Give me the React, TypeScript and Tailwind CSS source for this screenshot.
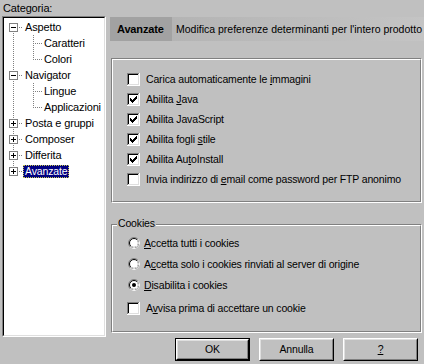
import React from "react";

const FONT = "font-['Liberation_Sans',Arial,sans-serif] text-[10.5px] tracking-[-0.15px] leading-[13px] text-black";

type Node = {
  label: string;
  level: 0 | 1;
  exp?: "+" | "-";
  first?: boolean;
  last?: boolean;
  lastChild?: boolean;
  selected?: boolean;
};

const tree: Node[] = [
  { label: "Aspetto", level: 0, exp: "-", first: true },
  { label: "Caratteri", level: 1 },
  { label: "Colori", level: 1, lastChild: true },
  { label: "Navigator", level: 0, exp: "-" },
  { label: "Lingue", level: 1 },
  { label: "Applicazioni", level: 1, lastChild: true },
  { label: "Posta e gruppi", level: 0, exp: "+" },
  { label: "Composer", level: 0, exp: "+" },
  { label: "Differita", level: 0, exp: "+" },
  { label: "Avanzate", level: 0, exp: "+", last: true, selected: true },
];

// dotted 1px lines, every other pixel
function vDots(x: number, y0: number, y1: number, key: string) {
  const out = [];
  for (let y = y0; y <= y1; y++) {
    if (y % 2 === 0) out.push(<rect key={key + y} x={x} y={y} width={1} height={1} fill="#808080" />);
  }
  return out;
}

function hDots(y: number, x0: number, x1: number, key: string) {
  const out = [];
  for (let x = x0; x <= x1; x++) {
    if (x % 2 === 1) out.push(<rect key={key + x} x={x} y={y} width={1} height={1} fill="#808080" />);
  }
  return out;
}

function ExpandBox({ kind }: { kind: "+" | "-" }) {
  return (
    <g>
      <rect x={5.5} y={4.5} width={8} height={8} fill="#fff" stroke="#808080" />
      <rect x={7} y={8} width={5} height={1} fill="#000" />
      {kind === "+" && <rect x={9} y={6} width={1} height={5} fill="#000" />}
    </g>
  );
}

function TreeRow({ node }: { node: Node }) {
  const w = node.level === 0 ? 19 : 38;
  return (
    <div className="flex h-[16px] items-center">
      <svg width={w} height={16} className="shrink-0" shapeRendering="crispEdges">
        {node.level === 0 ? (
          <>
            {!node.first && vDots(9, 0, 3, "a")}
            {!node.last && vDots(9, 13, 15, "b")}
            {hDots(8, 14, 18, "c")}
            <ExpandBox kind={node.exp ?? "+"} />
          </>
        ) : (
          <>
            {vDots(9, 0, 15, "a")}
            {vDots(29, 0, node.lastChild ? 8 : 15, "b")}
            {hDots(8, 30, 37, "c")}
          </>
        )}
      </svg>
      <span
        className={
          node.selected
            ? "px-[2px] h-[13px] bg-[#000080] text-white outline outline-1 outline-dotted outline-[#c8c850] -outline-offset-1"
            : "px-[2px] h-[13px] text-[11px]"
        }
      >
        {node.label}
      </span>
    </div>
  );
}

function Check({ on }: { on?: boolean }) {
  const px = [
    [6, 0],
    [5, 1], [6, 1],
    [0, 2], [4, 2], [5, 2], [6, 2],
    [0, 3], [1, 3], [3, 3], [4, 3], [5, 3],
    [0, 4], [1, 4], [2, 4], [3, 4], [4, 4],
    [1, 5], [2, 5], [3, 5],
    [2, 6],
  ];
  return (
    <svg width={13} height={13} className="shrink-0" shapeRendering="crispEdges">
      <rect x={0} y={0} width={12} height={1} fill="#808080" />
      <rect x={0} y={0} width={1} height={12} fill="#808080" />
      <rect x={0} y={12} width={13} height={1} fill="#fff" />
      <rect x={12} y={0} width={1} height={13} fill="#fff" />
      <rect x={1} y={1} width={10} height={1} fill="#000" />
      <rect x={1} y={1} width={1} height={10} fill="#000" />
      <rect x={1} y={11} width={11} height={1} fill="#dfdfdf" />
      <rect x={11} y={1} width={1} height={11} fill="#dfdfdf" />
      <rect x={2} y={2} width={9} height={9} fill="#fff" />
      {on && px.map(([x, y]) => <rect key={`${x}-${y}`} x={3 + x} y={3 + y} width={1} height={1} fill="#000" />)}
    </svg>
  );
}

function Radio({ on }: { on?: boolean }) {
  return (
    <svg width={12} height={12} className="shrink-0">
      <circle cx={6} cy={6} r={5.5} fill="none" stroke="#808080" />
      <path d="M9.89 2.11 A5.5 5.5 0 0 1 2.11 9.89" fill="none" stroke="#fff" />
      <circle cx={6} cy={6} r={4.5} fill="#fff" stroke="#000" />
      <path d="M9.18 2.82 A4.5 4.5 0 0 1 2.82 9.18" fill="none" stroke="#dfdfdf" />
      {on && <circle cx={6} cy={6} r={2} fill="#000" />}
    </svg>
  );
}

function Etched({ className, children }: { className?: string; children: React.ReactNode }) {
  return (
    <div className={`border border-t-[#808080] border-l-[#808080] border-r-white border-b-white ${className ?? ""}`}>
      <div className="h-full border border-t-white border-l-white border-r-[#808080] border-b-[#808080]">{children}</div>
    </div>
  );
}

function Button({ children, isDefault }: { children: React.ReactNode; isDefault?: boolean }) {
  const inner = (
    <div className="flex-1 flex border border-t-white border-l-white border-r-black border-b-black">
      <div className="flex-1 flex items-center justify-center border border-t-[#dfdfdf] border-l-[#dfdfdf] border-r-[#808080] border-b-[#808080]">
        {children}
      </div>
    </div>
  );
  return (
    <div className={`w-[75px] h-[23px] flex ${isDefault ? "border border-black" : ""}`}>{inner}</div>
  );
}

const checks: { on: boolean; label: React.ReactNode }[] = [
  { on: false, label: <>Carica automaticamente le <span className="underline">i</span>mmagini</> },
  { on: true, label: <>Abilita <span className="underline">J</span>ava</> },
  { on: true, label: <>Abilita JavaScript</> },
  { on: true, label: <>Abilita fogli <span className="underline">s</span>tile</> },
  { on: true, label: <>Abilita Au<span className="underline">t</span>oInstall</> },
  { on: false, label: <>Invia indirizzo di <span className="underline">e</span>mail come password per FTP anonimo</> },
];

export default function App() {
  return (
    <div className={`w-[424px] h-[364px] bg-[#c0c0c0] flex overflow-hidden ${FONT}`}>
      <div className="w-[106px] pl-[2px] flex flex-col shrink-0">
        <div className="pl-[1px] pt-[2px] h-[16px] text-[11px]">Categoria:</div>
        <div className="h-[321px] border border-t-[#808080] border-l-[#808080] border-r-white border-b-white">
          <div className="h-full bg-white border border-t-black border-l-black border-r-[#dfdfdf] border-b-[#dfdfdf] pt-[1px]">
            {tree.map((n) => (
              <TreeRow key={n.label} node={n} />
            ))}
          </div>
        </div>
      </div>

      <div className="ml-[4px] pt-[17px] w-[314px] shrink-0 flex flex-col">
        <div className="h-[24px] flex items-center bg-gradient-to-r from-[#b0b0b0] to-[#c4c4c4]">
          <div className="h-full flex items-center bg-[#a2a2a2] pl-[7px] pr-[2px] w-[62px] font-bold text-[11px]">Avanzate</div>
          <div className="pl-[4px] whitespace-nowrap tracking-[0px]">Modifica preferenze determinanti per l'intero prodotto</div>
        </div>

        <Etched className="mt-[17px] ml-[1px] mr-[2px] h-[145px]">
          <div className="pl-[14px] pt-[13px] flex flex-col gap-[7px]">
            {checks.map((c, i) => (
              <div key={i} className="flex items-center h-[13px] gap-[6px]">
                <Check on={c.on} />
                <span className="whitespace-nowrap">{c.label}</span>
              </div>
            ))}
          </div>
        </Etched>

        <div className="relative mt-[21px] ml-[1px] mr-[2px]">
          <Etched className="h-[109px]">
            <div className="pl-[15px] pt-[11px] flex flex-col">
              <div className="flex items-center h-[12px] gap-[4px]">
                <Radio />
                <span><span className="underline">A</span>ccetta tutti i cookies</span>
              </div>
              <div className="flex items-center h-[12px] gap-[4px] mt-[9px]">
                <Radio />
                <span>A<span className="underline">c</span>cetta solo i cookies rinviati al server di origine</span>
              </div>
              <div className="flex items-center h-[12px] gap-[4px] mt-[9px]">
                <Radio on />
                <span><span className="underline">D</span>isabilita i cookies</span>
              </div>
              <div className="flex items-center h-[13px] gap-[6px] mt-[11px] -ml-[1px]">
                <Check />
                <span>A<span className="underline">v</span>visa prima di accettare un cookie</span>
              </div>
            </div>
          </Etched>
          <div className="absolute left-[6px] -top-[7px] px-[1px] bg-[#c0c0c0]">Cookies</div>
        </div>

        <div className="mt-[5px] mr-[6px] flex justify-end gap-[9px]">
          <Button isDefault>OK</Button>
          <Button>Annulla</Button>
          <Button><span className="underline">?</span></Button>
        </div>
      </div>
    </div>
  );
}
